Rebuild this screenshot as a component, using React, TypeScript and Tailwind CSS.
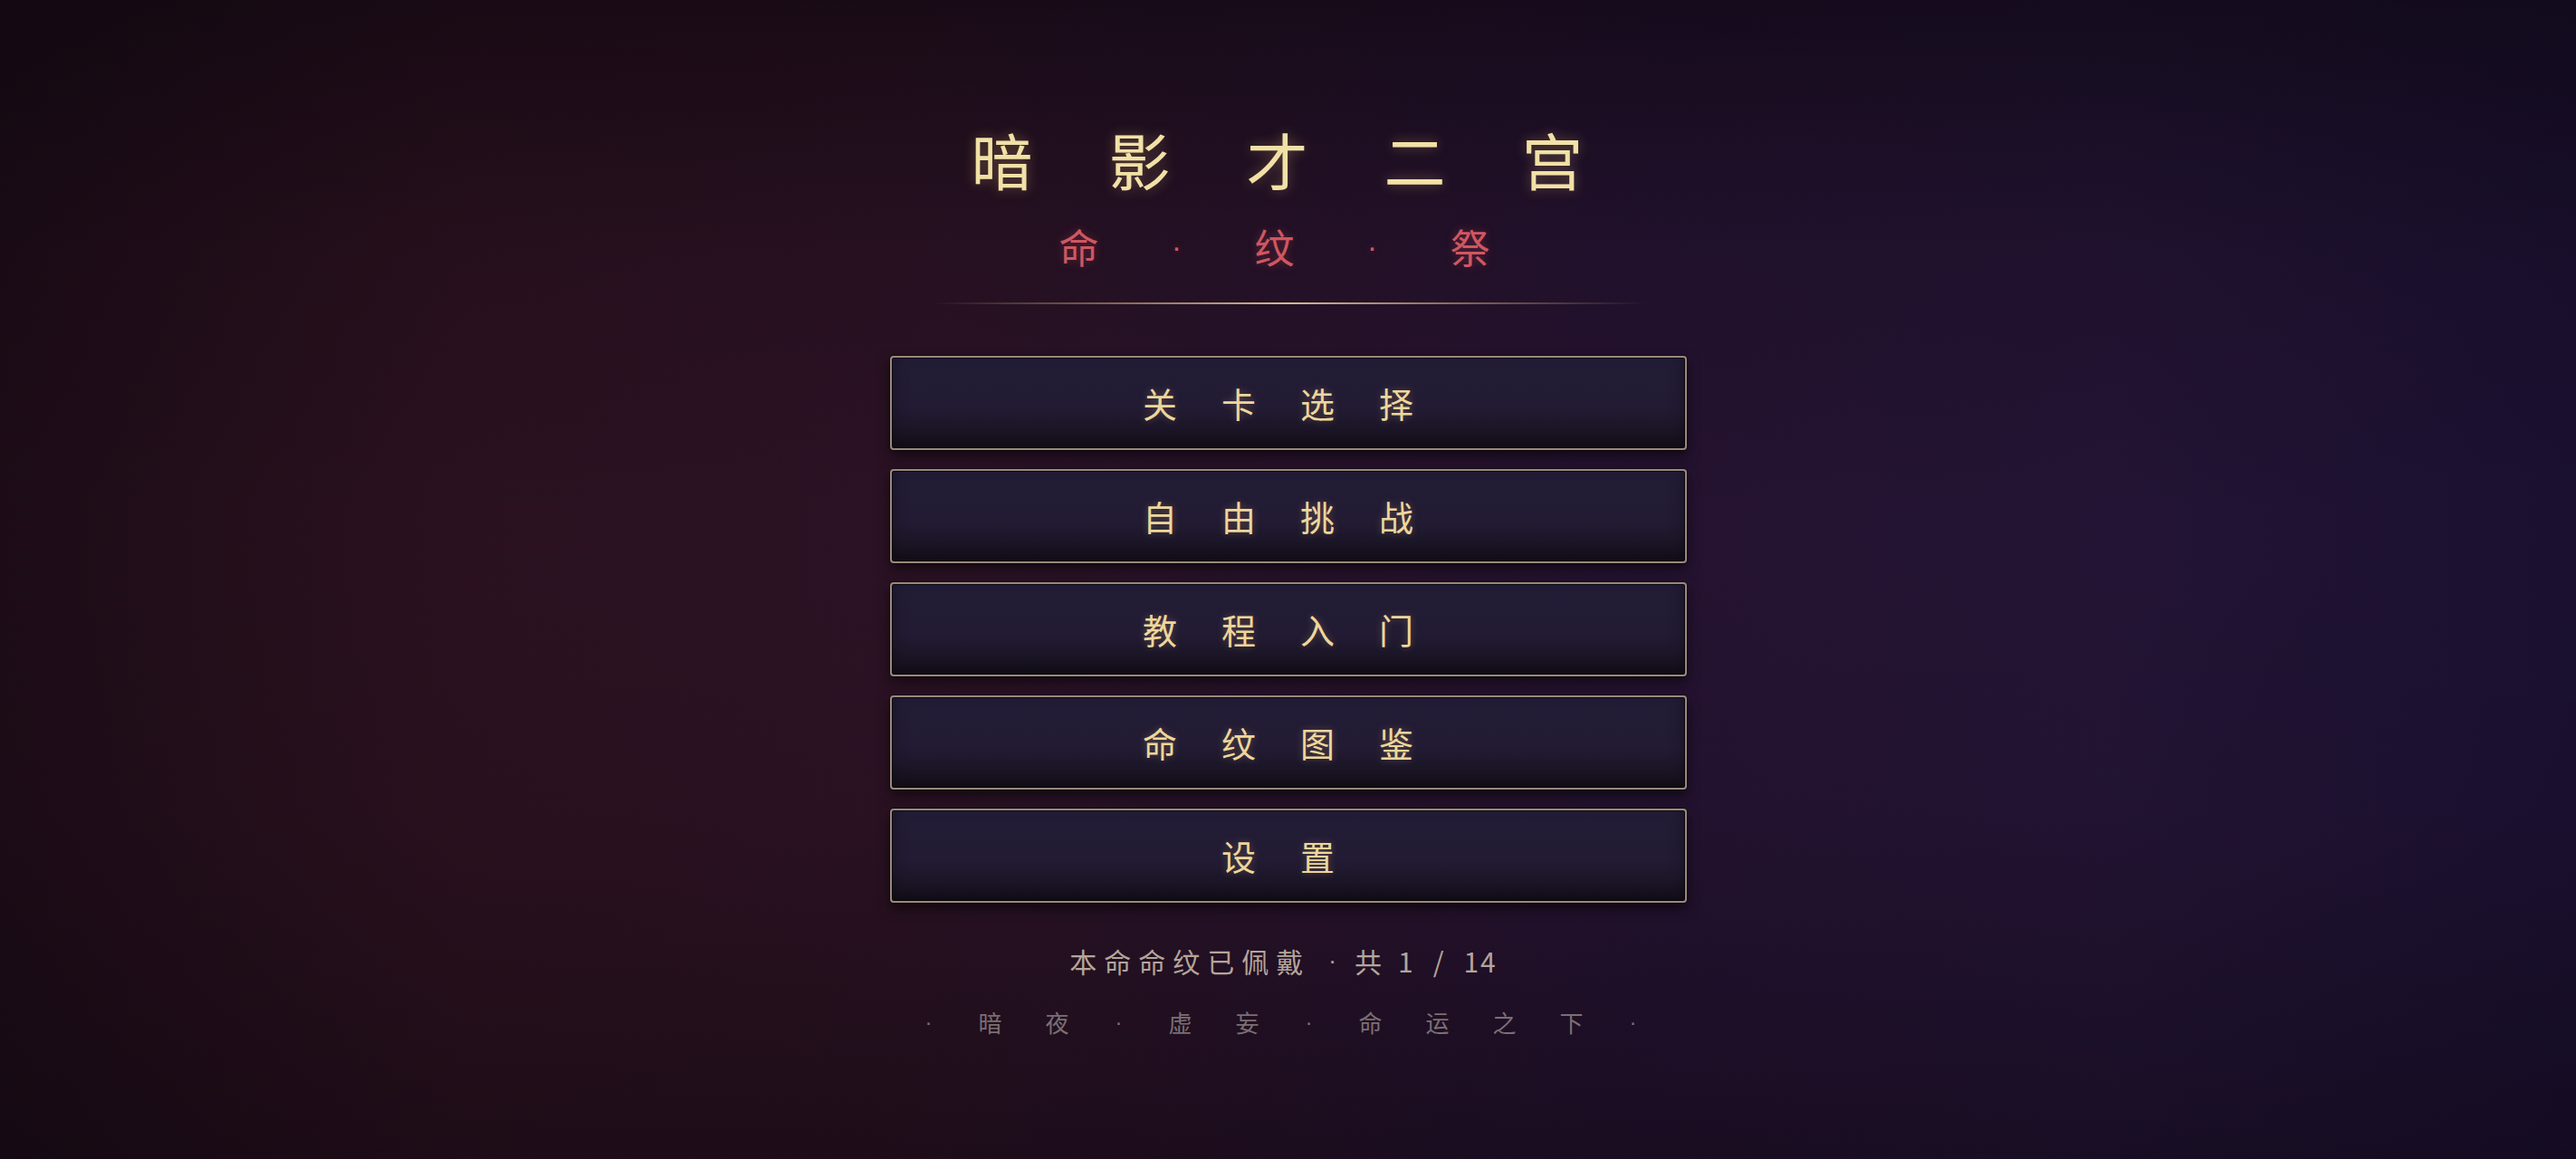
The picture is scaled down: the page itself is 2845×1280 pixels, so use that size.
import React from "react";

const MENU = [
  ["关", "卡", "选", "择"],
  ["自", "由", "挑", "战"],
  ["教", "程", "入", "门"],
  ["命", "纹", "图", "鉴"],
  ["设", "置"],
];

const TAGLINE = ["·", "暗", "夜", "·", "虚", "妄", "·", "命", "运", "之", "下", "·"];

function Dot({ className = "" }: { className?: string }) {
  return <span className={`font-['Liberation_Sans',sans-serif] ${className}`}>·</span>;
}

function MenuButton({ chars }: { chars: string[] }) {
  return (
    <button
      type="button"
      className="relative flex h-[104px] w-[880px] items-center justify-center rounded-[4px] border-2 border-[#9a897c] bg-[linear-gradient(180deg,#221c36_0%,#221b33_55%,#17121f_100%)] shadow-[0_6px_14px_rgba(0,0,0,0.55),0_0_0_1px_rgba(20,10,15,0.7),inset_0_0_0_1px_rgba(0,0,0,0.6),inset_0_-10px_18px_rgba(0,0,0,0.35)]"
    >
      <span className="flex gap-[49px] pr-[22px] text-[38px] leading-none text-[#eed69c] [text-shadow:0_0_8px_rgba(236,200,130,0.3)]">
        {chars.map((c, i) => (
          <span key={i}>{c}</span>
        ))}
      </span>
    </button>
  );
}

export default function App() {
  return (
    <div className="relative h-[1280px] w-full overflow-hidden bg-[linear-gradient(90deg,#1c0c17_0%,#2b111f_18%,#2b1222_35%,#241230_62%,#221434_82%,#1b1030_100%)] font-['Noto_Sans_CJK_SC','Noto_Sans',sans-serif]">
      {/* vignette: darker toward the top and bottom edges */}
      <div className="pointer-events-none absolute inset-0 bg-[linear-gradient(180deg,rgba(10,5,12,0.55)_0%,rgba(10,5,12,0.15)_22%,rgba(10,5,12,0)_45%,rgba(10,5,12,0.05)_70%,rgba(10,5,12,0.4)_100%)]" />
      <div className="pointer-events-none absolute inset-0 bg-[radial-gradient(ellipse_at_50%_45%,rgba(40,20,45,0.25)_0%,rgba(0,0,0,0)_60%)]" />

      <main className="relative flex flex-col items-center pt-[142px]">
        {/* title */}
        <h1 className="flex gap-[84px] pr-[24px] text-[68px] font-normal leading-none text-[#f2e1a6] [text-shadow:0_0_14px_rgba(240,200,120,0.35)]">
          {["暗", "影", "才", "二", "宫"].map((c) => (
            <span key={c}>{c}</span>
          ))}
        </h1>

        {/* subtitle */}
        <div className="mt-[40px] flex items-center gap-[64px] pr-[30px] text-[44px] leading-none text-[#cf5761] [text-shadow:0_0_10px_rgba(210,80,90,0.35)]">
          {["命", "·", "纹", "·", "祭"].map((c, i) =>
            c === "·" ? (
              <span key={i} className="flex w-[44px] justify-center text-[34px]">
                <Dot />
              </span>
            ) : (
              <span key={i} className="flex w-[44px] justify-center">
                {c}
              </span>
            )
          )}
        </div>

        {/* divider */}
        <div className="mt-[40px] h-[2px] w-[790px] bg-[linear-gradient(90deg,rgba(180,150,110,0)_0%,rgba(170,140,105,0.55)_20%,rgba(222,194,148,0.95)_50%,rgba(170,140,105,0.55)_80%,rgba(180,150,110,0)_100%)]" />

        {/* menu */}
        <nav className="mt-[57px] flex flex-col gap-[21px]">
          {MENU.map((chars) => (
            <MenuButton key={chars.join("")} chars={chars} />
          ))}
        </nav>

        {/* status line */}
        <p className="mt-[49px] flex items-center pr-[10px] text-[30px] leading-none text-[#b5a59a]">
          <span className="tracking-[8px]">本命命纹已佩戴</span>
          <Dot className="mx-[20px] text-[26px]" />
          <span>共</span>
          <span className="ml-[18px]">1</span>
          <span className="ml-[22px]">/</span>
          <span className="ml-[22px] tracking-[2px]">14</span>
        </p>

        {/* tagline */}
        <div className="mt-[40px] flex items-center gap-[48px] pr-[16px] text-[26px] leading-none text-[#7b6f73]">
          {TAGLINE.map((c, i) =>
            c === "·" ? (
              <span key={i} className="flex w-[14px] justify-center text-[24px]">
                <Dot />
              </span>
            ) : (
              <span key={i}>{c}</span>
            )
          )}
        </div>
      </main>
    </div>
  );
}
